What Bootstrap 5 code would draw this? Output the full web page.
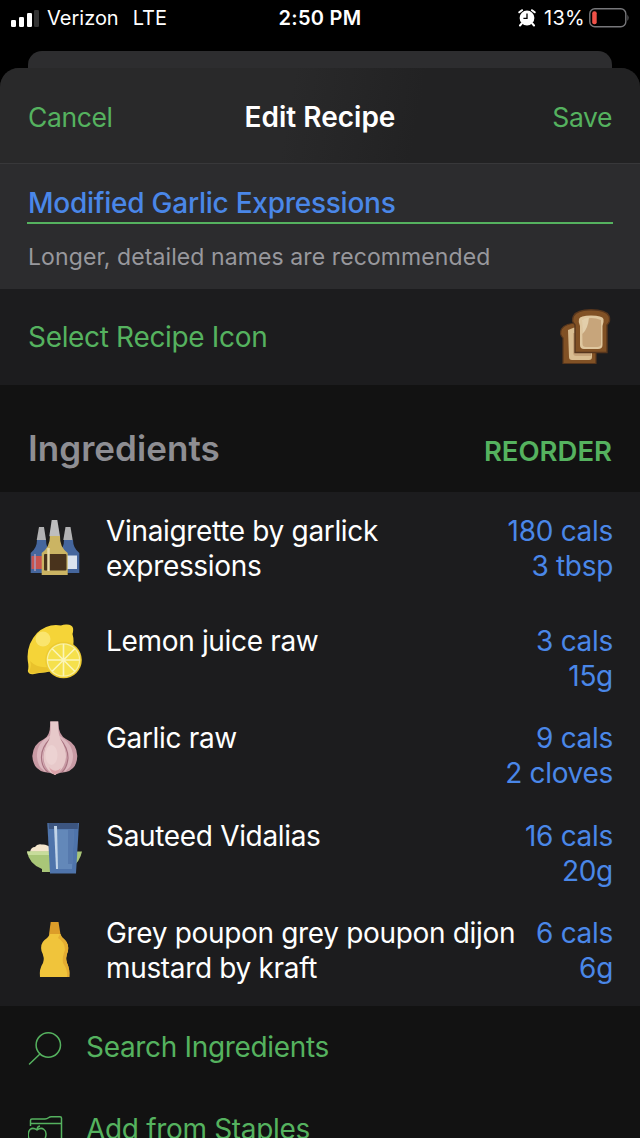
<!DOCTYPE html>
<html lang="en" data-bs-theme="dark">
<head>
    <meta charset="UTF-8" />
    <title>Edit Recipe</title>
    <meta name="viewport" content="width=device-width, initial-scale=1">
    <link href="https://cdn.jsdelivr.net/npm/bootstrap@5.3.0/dist/css/bootstrap.min.css" rel="stylesheet">
    <style>
        :root {
            --app-green: #55b25f;
            --app-blue: #4a87e8;
        }
        body {
            height: 1138px;
            background: #000;
            color: #fff;
            font-family: Inter, "Liberation Sans", sans-serif;
            font-size: 28px;
            line-height: 35px;
            letter-spacing: -0.33px;
        }
        .text-app-green { color: var(--app-green); }
        .text-app-blue { color: var(--app-blue); }
        .px-app { padding-left: 28px; padding-right: 28px; }

        .status-bar { height: 51px; font-size: 20px; line-height: 36px; letter-spacing: 0.3px; }
        .status-side { flex: 1 1 0; height: 36px; }
        .signal { margin-left: 11px; }
        .carrier { letter-spacing: 0; margin-right: 14px; }
        .battery { margin: 0 11px 0 4px; }
        .sheet-back { height: 17px; margin: 0 28px; background: #2d2d2f; border-radius: 14px 14px 0 0; }
        .sheet { background: #121212; height: 1070px; }
        .sheet-wrap { background: linear-gradient(#2d2d2f, #2d2d2f) center top / 584px 20px no-repeat; }
        .sheet, .sheet-head { border-radius: 19px 19px 0 0; }
        .sheet-head { height: 96px; padding-top: 3px; font-size: 26.5px; letter-spacing: -0.4px; background: linear-gradient(100deg, #29292a 45%, #222223 65%); border-bottom: 1px solid #38383a; }
        .sheet-head > span { flex: 1 1 0; }
        .sheet-head > .sheet-title { flex: none; font-size: 28px; font-weight: 600; letter-spacing: 0; }

        .name-block { height: 125px; background: #2c2c2e; padding-top: 20px; }
        .name-input { height: 40px; border-bottom: 2px solid var(--app-green); font-weight: 500; letter-spacing: -0.25px; margin-right: -1px; margin-left: -1px; padding-left: 1px; line-height: 38px; }
        .name-hint { font-size: 23px; letter-spacing: 0.1px; color: #98989d; margin-top: 16px; }
        .icon-row { height: 96px; background: #1c1c1e; }
        .list-head { height: 107px; padding-top: 20px; }
        .list-title { font-size: 35px; font-weight: 600; letter-spacing: 0.05px; color: #8e8e93; }
        .reorder { font-weight: 600; font-size: 27.5px; letter-spacing: 0; padding-top: 6px; }

        .food-list { height: 514px; background: #1c1c1e; padding-top: 8px; }
        .food-row { height: 97.4px; padding-top: 14px; }
        .food-row:first-child { height: 110px; }
        .food-icon { width: 55px; height: 55px; flex: none; margin: 0 24px 0 -1px; }
        .two-line .food-icon { margin-top: 6px; }
        .food-amount { letter-spacing: -0.3px; margin-right: -1px; }
        .action-row { height: 82px; padding-top: 1px; }
        .action-icon { width: 36px; height: 36px; margin-right: 22px; flex: none; }
    </style>
</head>
<body class="overflow-hidden">

<div class="status-bar d-flex">
    <div class="status-side d-flex align-items-center">
        <svg class="signal" width="28" height="17" viewBox="0 0 28 17">
            <rect x="0" y="10" width="5" height="7" rx="1.3" fill="#fff"/>
            <rect x="8" y="7" width="5" height="10" rx="1.3" fill="#fff"/>
            <rect x="16" y="3" width="5" height="14" rx="1.3" fill="#fff"/>
            <rect x="23" y="0" width="5" height="17" rx="1.3" fill="#333"/>
        </svg>
        <span class="carrier ms-2">Verizon</span>
        <span class="carrier">LTE</span>
    </div>
    <div class="fw-semibold">2:50 PM</div>
    <div class="status-side d-flex align-items-center justify-content-end">
        <svg width="18" height="18" viewBox="0 0 18 18">
            <g fill="none" stroke="#fff" stroke-width="2" stroke-linecap="round">
                <path d="M1.3 3.3 4 1.2M16.7 3.3 14 1.2M3.7 14.5 2 16.5M14.3 14.5 16 16.5"/>
            </g>
            <circle cx="9" cy="9" r="7.4" fill="#fff"/>
            <path d="M9 4.5V9.3H5.4" fill="none" stroke="#000" stroke-width="1.3"/>
        </svg>
        <span class="ms-2">13%</span>
        <svg class="battery" width="40" height="20" viewBox="0 0 40 20">
            <rect x=".8" y=".8" width="36" height="18" rx="5" fill="none" stroke="#77777a" stroke-width="1.4"/>
            <rect x="3.2" y="3.2" width="4.5" height="13" rx="2" fill="#ef5148"/>
            <path d="M38.500 6.500q2 3.300 0 6.600z" fill="#77777a"/>
        </svg>
    </div>
</div>

<div class="sheet-back"></div>
<div class="sheet-wrap">
<main class="sheet">
    <header class="sheet-head d-flex align-items-center justify-content-between px-app">
        <span class="text-app-green">Cancel</span>
        <span class="sheet-title">Edit Recipe</span>
        <span class="text-app-green text-end">Save</span>
    </header>

    <section class="name-block px-app">
        <div class="name-input text-app-blue">Modified Garlic Expressions</div>
        <div class="name-hint">Longer, detailed names are recommended</div>
    </section>

    <section class="icon-row d-flex align-items-center justify-content-between px-app">
        <span class="text-app-green">Select Recipe Icon</span>
        <svg width="55" height="56" viewBox="0 0 55 56">
            <path d="M6 54.5V29Q2 25 4.5 20Q8 14 22 14Q37 14 40 21Q42 26 39 29V54.5Z" fill="#815125" stroke="#57361d" stroke-width="1.2"/>
            <path d="M11 21Q22 15 35 21V48Q35 51 32 51H15Q12 51 12 48Z" fill="#d9bd91"/>
            <path d="M16 24H34V47H19Q16 47 16 43Z" fill="#c5a278"/>
            <path d="M18 43.5V16Q14 12 16.5 7Q20 .8 34 .8Q49 .8 52 7Q54 12 50 16V43.5Z" fill="#815125" stroke="#57361d" stroke-width="1.4"/>
            <path d="M22 10Q23 6.5 34 6.5Q45.5 6.5 46.5 10Q47 13 45.5 17V36Q45.5 40 41 40H27Q23 40 23 36V17Q21 13 22 10Z" fill="#dfc79f"/>
            <path d="M25 11Q34 7 44 11V35Q44 38 40 38H29Q25.5 38 25.5 35Z" fill="#c7a57b"/>
            <path d="M25 11Q28 8.5 32 8.5Q31 20 25.3 25Z" fill="#e3cfab"/>
        </svg>
    </section>

    <div class="list-head d-flex align-items-center justify-content-between px-app">
        <span class="list-title">Ingredients</span>
        <span class="reorder text-app-green">REORDER</span>
    </div>

    <section class="food-list px-app">
        <div class="food-row two-line d-flex">
            <svg class="food-icon" viewBox="0 0 55 55">
                <path d="M12 7H17L19 20H9.7Z" fill="#b1b1b3"/>
                <path d="M10 20H19Q19 28 24 32V53H3.7V33Q10 28 10 20Z" fill="#45669d"/>
                <rect x="4.5" y="36" width="11" height="13" fill="#c9544f"/>
                <path d="M8 34V51" stroke="#a99bbb" stroke-width="1.5"/>
                <path d="M38.5 7H43.5L45.7 20H36.3Z" fill="#b1b1b3"/>
                <path d="M37 20H46Q46 28 52.3 33V53H32V32Q37 28 37 20Z" fill="#45669d"/>
                <rect x="39" y="35.5" width="11" height="13.5" fill="#dbe3ee"/>
                <path d="M24.7 0H30.3L33 16.3H22.3Z" fill="#bebebf"/>
                <path d="M23 16H33Q32.5 27 40.7 33V55H14.7V33Q23 27 23 16Z" fill="#cbb463"/>
                <rect x="17" y="34" width="22.5" height="16.5" rx="1" fill="#49331c"/>
                <path d="M21.5 28V51" stroke="#e8dba8" stroke-width="2.5"/>
            </svg>
            <div class="flex-grow-1">Vinaigrette by garlick<br>expressions</div>
            <div class="food-amount text-app-blue text-end text-nowrap">180 cals<br>3 tbsp</div>
        </div>
        <div class="food-row d-flex">
            <svg class="food-icon" viewBox="0 0 55 55">
                <path d="M.8 47Q2 43 .8 37Q-1 21 10 9Q21 -1 34 1.5Q37 .2 40 .5Q45 .5 46 4Q46.5 7 45.5 10Q49 22 41 36Q32 47 18 48.5Q12 48.5 7 50Q2 51 .8 47Z" fill="#f5d438"/>
                <path d="M2 47Q5 42 3 37Q15 49 36 38Q30 46 18 48Q12 48 7 49.5Q3 50 2 47Z" fill="#e9c22c"/>
                <circle cx="16" cy="15" r="7.5" fill="#fae56d"/>
                <circle cx="36.5" cy="36" r="18.3" fill="#edcb31"/>
                <circle cx="36.5" cy="36" r="16.8" fill="#f9f0a0"/>
                <circle cx="36.5" cy="36" r="15.5" fill="#f5e04c"/>
                <path d="M36.5 20V52M20.5 36H52.5M25.2 24.7 47.8 47.3M47.8 24.7 25.2 47.3" stroke="#fbf5b8" stroke-width="1.6"/>
            </svg>
            <div class="flex-grow-1">Lemon juice raw</div>
            <div class="food-amount text-app-blue text-end text-nowrap">3 cals<br>15g</div>
        </div>
        <div class="food-row d-flex">
            <svg class="food-icon" viewBox="0 0 55 55">
                <path d="M23 .5H31.5Q31 14 39 18Q50 23 50.3 35Q50 48 39 51Q34 51 28 53.5Q22 51 17 51Q6 48 5.3 35Q6 23 17 18Q24 14 23 .5Z" fill="#c89aa4"/>
                <path d="M24 14Q9 22 10 36Q11 48 20 51Q10 36 24 14ZM31 14Q46 22 46 36Q45 48 36 51Q46 36 31 14Z" fill="#dcb7be"/>
                <path d="M23 18Q14 27 14.5 37Q15 47 21 51M33 18Q41 27 41 37Q40 47 35 51" fill="none" stroke="#a97481" stroke-width="1.2"/>
                <path d="M23.5 .5H31Q31 14 34 19Q39 27 39 36Q38 48 28 54Q17 49 16.5 36Q17 27 22 19Q24 14 23.5 .5Z" fill="#e7c9ca"/>
                <ellipse cx="24.5" cy="34" rx="6" ry="10" fill="#ecd2d2"/>
                <path d="M22 46Q28 53 34 47Q32 52 28 54Q24 52 22 46Z" fill="#dca3aa"/>
            </svg>
            <div class="flex-grow-1">Garlic raw</div>
            <div class="food-amount text-app-blue text-end text-nowrap">9 cals<br>2 cloves</div>
        </div>
        <div class="food-row d-flex">
            <svg class="food-icon" viewBox="0 0 55 55">
                <path d="M3 33Q4 28 8 28Q10 24.5 15 25.5Q20 25 24 29V34H3Z" fill="#f4e5cc"/>
                <path d="M0 32.5H55Q53 43 44 49V53H15V50Q2 45 0 32.5Z" fill="#a9c678"/>
                <path d="M0 32.5H22V36H1Z" fill="#c7dc9b"/>
                <path d="M20.3 4H52L49 54.5H23Z" fill="#4f74ab"/>
                <path d="M21.5 4H51L50.7 10H22Z" fill="#3c5580"/>
                <path d="M30 10.5H47L45 50H30Z" fill="#6388b9"/>
                <path d="M41 10.5H47L45.5 45H41Z" fill="#5679ad"/>
                <path d="M27 7H30L31 50H29Z" fill="#c3d5e9"/>
            </svg>
            <div class="flex-grow-1">Sauteed Vidalias</div>
            <div class="food-amount text-app-blue text-end text-nowrap">16 cals<br>20g</div>
        </div>
        <div class="food-row two-line d-flex">
            <svg class="food-icon" viewBox="0 0 55 55">
                <path d="M23.7 0H31.5L33.5 12.5H22Z" fill="#dc9d29"/>
                <path d="M22.5 12H33.5Q34 15 38 18Q42 22 41 29Q38 36 40 41Q43 47 42.3 55H13Q12 47 16 41Q18 36 14.5 29Q13 22 17.5 18Q22 15 22.5 12Z" fill="#f0c43b"/>
                <path d="M33 12Q34 15 38 18Q42 22 41 29Q38 36 40 41Q43 47 42.3 55H40Q41 48 36 41Q35 35 38 28Q38 20 31 16Z" fill="#e4ad32"/>
            </svg>
            <div class="flex-grow-1 text-nowrap">Grey poupon grey poupon dijon<br>mustard by kraft</div>
            <div class="food-amount text-app-blue text-end text-nowrap">6 cals<br>6g</div>
        </div>
    </section>

    <a class="action-row d-flex align-items-center px-app text-app-green text-decoration-none" href="#">
        <svg class="action-icon" viewBox="0 0 36 36" fill="none" stroke="#55b25f" stroke-width="1.5" stroke-linecap="round">
            <circle cx="20.3" cy="15" r="12.2"/>
            <path d="M12 24 1.5 34"/>
        </svg>
        <span>Search Ingredients</span>
    </a>
    <a class="action-row d-flex align-items-center px-app text-app-green text-decoration-none" href="#">
        <svg class="action-icon" viewBox="0 0 36 36" fill="none" stroke="#55b25f" stroke-width="1.5" stroke-linejoin="round">
            <path d="M2.5 14V8.5Q2.5 7 4 7H17Q19 7 20.5 5.7T24 4.7H32Q33.5 4.700 33.5 6.2V32H16M2.5 11.5H33.5"/>
            <path d="M9 18Q5 15 2 17.5Q-1 21 1 27Q4 33 9 31Q14 33 17 27Q19.5 20 16 17.5Q13 15 9 18ZM9 18Q9 14.5 12 14"/>
        </svg>
        <span>Add from Staples</span>
    </a>
</main>
</div>

<script src="https://cdn.jsdelivr.net/npm/bootstrap@5.3.0/dist/js/bootstrap.bundle.min.js"></script>
</body>
</html>
